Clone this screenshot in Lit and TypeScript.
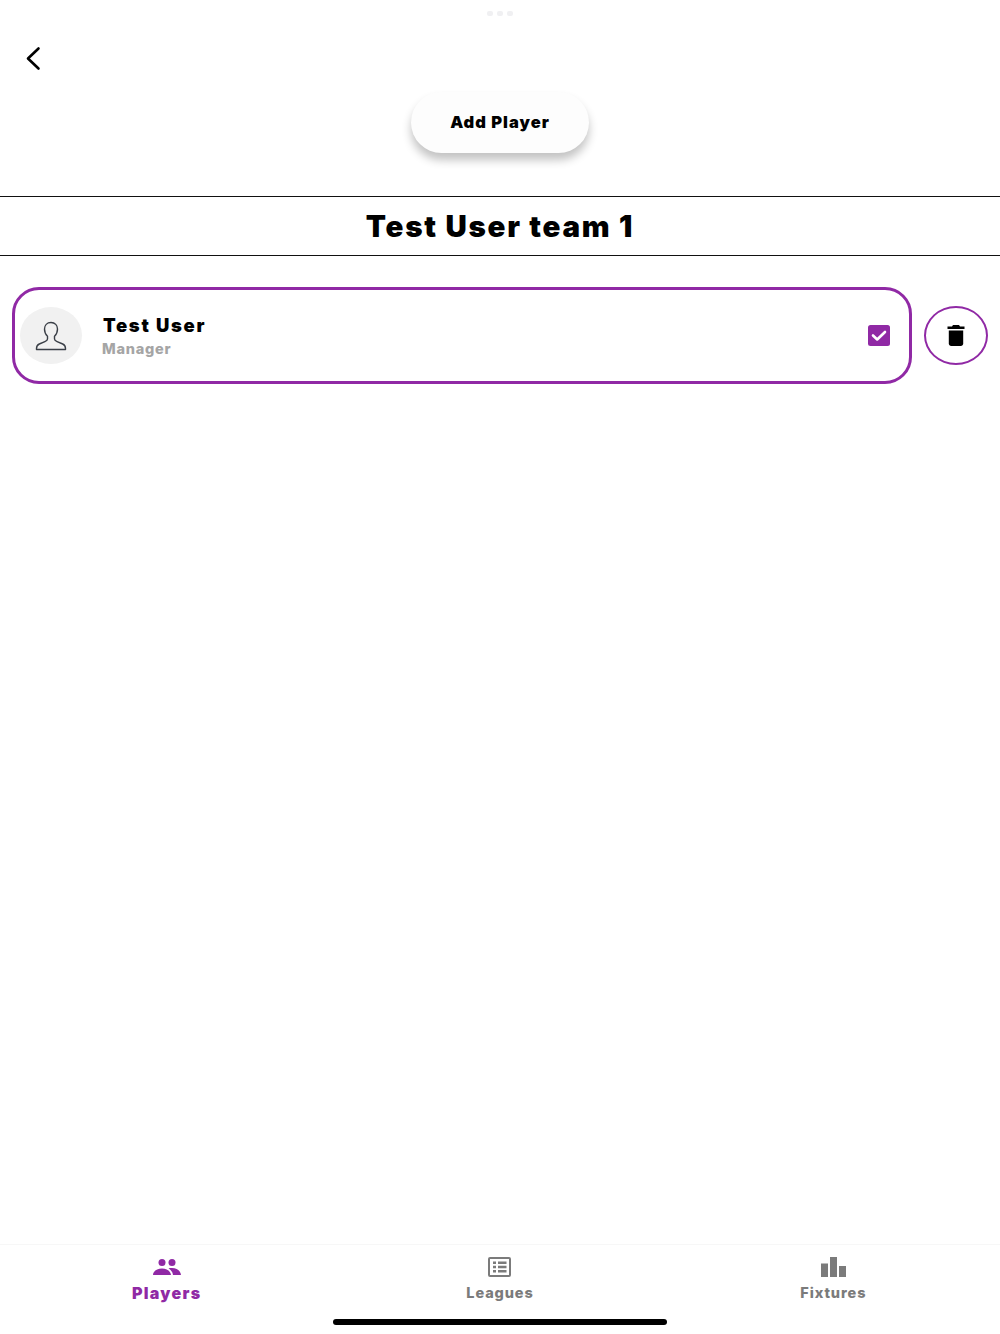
import { LitElement, html, css } from "lit";
import { customElement } from "lit/decorators.js";

@customElement("app-root")
export class AppRoot extends LitElement {
  static styles = css`
    :host {
      display: flex;
      flex-direction: column;
      position: relative;
      height: 1334px;
      width: 1000px;
      background: #fff;
      overflow: hidden;
      font-family: Inter, "Liberation Sans", sans-serif;
      color: #000;
    }
    .dots {
      position: absolute;
      top: 11px;
      left: 487px;
      display: flex;
      gap: 4px;
    }
    .dots i {
      width: 6px;
      height: 5px;
      border-radius: 2px;
      background: #f0f0f2;
    }
    .back {
      display: block;
      margin: 45px 0 0 24px;
      width: 20px;
      height: 26px;
    }
    .add-wrap {
      display: flex;
      justify-content: center;
      margin-top: 21px;
    }
    .add {
      width: 178px;
      height: 61px;
      border-radius: 31px;
      background: #fdfdfd;
      display: flex;
      align-items: center;
      justify-content: center;
      padding-bottom: 2px;
      box-sizing: border-box;
      font-size: 16.5px;
      font-weight: 900;
      letter-spacing: 1px;
      box-shadow: 0 7px 10px rgba(0, 0, 0, 0.24);
    }
    .title {
      margin-top: 43px;
      height: 58px;
      border-top: 1px solid #111;
      border-bottom: 1px solid #111;
      display: flex;
      align-items: center;
      justify-content: center;
      font-size: 29.5px;
      font-weight: 900;
      letter-spacing: 1.75px;
    }
    .row {
      display: flex;
      align-items: center;
      gap: 12px;
      padding: 31px 12px 0;
    }
    .card {
      box-sizing: border-box;
      width: 900px;
      height: 97px;
      border: 3px solid #9029a5;
      border-radius: 27px;
      display: flex;
      align-items: center;
      padding: 0 19px 0 5px;
    }
    .avatar {
      width: 62px;
      height: 57px;
      border-radius: 50%;
      background: #f1f1f1;
      display: flex;
      align-items: center;
      justify-content: center;
      flex: none;
    }
    .info {
      margin-left: 20px;
      flex: 1;
      display: flex;
      flex-direction: column;
      gap: 4px;
    }
    .name {
      font-size: 18.5px;
      font-weight: 900;
      letter-spacing: 1.7px;
      line-height: 22px;
      padding-left: 1px;
    }
    .role {
      font-size: 14.5px;
      font-weight: 800;
      letter-spacing: 0.75px;
      color: #a5a5a5;
      line-height: 18px;
    }
    .del {
      box-sizing: border-box;
      width: 64px;
      height: 59px;
      border: 2.5px solid #9029a5;
      border-radius: 50%;
      display: flex;
      align-items: center;
      justify-content: center;
      flex: none;
    }
    .spacer {
      flex: 1;
    }
    .tabs {
      height: 89px;
      border-top: 1px solid #f7f7f7;
      display: grid;
      grid-template-columns: repeat(3, 1fr);
    }
    .tab {
      display: flex;
      flex-direction: column;
      align-items: center;
      padding-top: 12px;
      font-size: 14.5px;
      font-weight: 800;
      letter-spacing: 0.9px;
      color: #7b7b7b;
    }
    .tab span {
      line-height: 18px;
      margin-top: 7px;
    }
    .tab.active {
      color: #9029a5;
      font-size: 16px;
      font-weight: 900;
      letter-spacing: 1.3px;
      padding-top: 14px;
    }
    .tab.active span {
      margin-top: 9px;
    }
    .home {
      position: absolute;
      left: 333px;
      top: 1319px;
      width: 334px;
      height: 6px;
      border-radius: 3px;
      background: #000;
    }
  `;

  render() {
    return html`
      <div class="dots"><i></i><i></i><i></i></div>
      <svg class="back" viewBox="0 0 20 26" fill="none" stroke="#000" stroke-width="2.6" stroke-linecap="round" stroke-linejoin="round">
        <path d="M14.5 3.5 L4 13.5 L14.5 23.500" />
      </svg>
      <div class="add-wrap"><div class="add">Add Player</div></div>
      <div class="title">Test User team 1</div>
      <div class="row">
        <div class="card">
          <div class="avatar">
            <svg width="32" height="30" viewBox="0 0 32 30" fill="none" stroke="#3a3f47" stroke-width="1.4" stroke-linejoin="round">
              <path d="M16 1.500c-4 0-6.500 2.800-6.500 6.600 0 3 1.200 5.600 3 7.200v2.600c0 1.300-1 2-2.600 2.700l-5.600 2.400c-1.900 .8-2.800 2.200-2.800 4.500v1h29v-1c0-2.300-.9-3.700-2.800-4.500l-5.600-2.400c-1.600-.7-2.600-1.400-2.600-2.700v-2.600c1.800-1.600 3-4.200 3-7.200 0-3.800-2.500-6.600-6.500-6.600z" />
            </svg>
          </div>
          <div class="info">
            <div class="name">Test User</div>
            <div class="role">Manager</div>
          </div>
          <svg width="22" height="21" viewBox="0 0 22 21">
            <rect width="22" height="21" rx="2.500" fill="#9029a5" />
            <path d="M5 10.500l4.200 4 7.800-7.500" fill="none" stroke="#fff" stroke-width="2.600" stroke-linecap="round" stroke-linejoin="round" />
          </svg>
        </div>
        <div class="del">
          <svg width="18" height="21" viewBox="0 0 18 21" fill="#000">
            <path d="M6 0h6l1 1.500h4.500v2.500H.5V1.500H5z" />
            <path d="M1.800 5.500h14.400v13c0 1.400-1 2.500-2.400 2.500H4.200c-1.400 0-2.400-1.100-2.400-2.500z" />
          </svg>
        </div>
      </div>
      <div class="spacer"></div>
      <div class="tabs">
        <div class="tab active">
          <svg width="28" height="16" viewBox="0 0 28 16" fill="#9029a5">
            <circle cx="9" cy="3.500" r="3.500" />
            <circle cx="19" cy="3.500" r="3.500" />
            <path d="M0 16c0-3.800 4-6.500 9-6.500s8.500 2.700 9 6.500z" />
            <path d="M15.500 9.300c1.100-.3 2.300-.4 3.500-.4 4.600 0 8.500 2.600 9 7.100h-8c-.2-2.600-2-5-4.500-6.700z" />
          </svg>
          <span>Players</span>
        </div>
        <div class="tab">
          <svg width="23" height="20" viewBox="0 0 23 20">
            <rect x="1" y="1" width="21" height="18" rx="1" fill="none" stroke="#7b7b7b" stroke-width="2" />
            <path d="M5 4.500h3v2.500h-3zM10 4.500h8.500v2.500h-8.500zM5 8.800h3v2.500h-3zM10 8.800h8.500v2.500h-8.500zM5 13h3v2.500h-3zM10 13h8.500v2.500h-8.500z" fill="#7b7b7b" />
          </svg>
          <span>Leagues</span>
        </div>
        <div class="tab">
          <svg width="25" height="20" viewBox="0 0 25 20" fill="#7b7b7b">
            <rect x="0" y="6.500" width="7" height="13.500" />
            <rect x="9" y="0" width="7" height="20" />
            <rect x="18" y="9" width="7" height="11" />
          </svg>
          <span>Fixtures</span>
        </div>
      </div>
      <div class="home"></div>
    `;
  }
}
